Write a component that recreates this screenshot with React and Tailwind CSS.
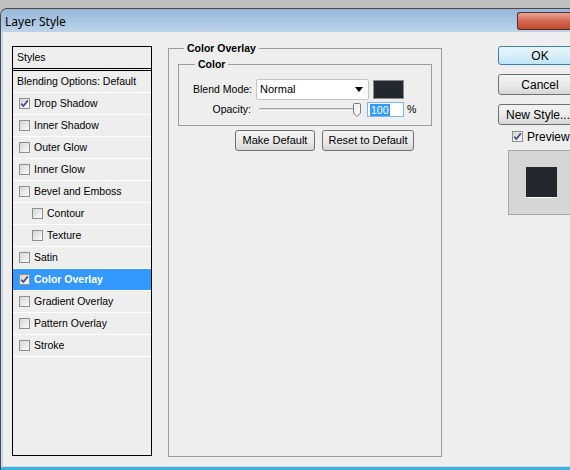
import React from "react";

const font = { fontFamily: '"Liberation Sans", Arial, sans-serif' };

const Check = ({ checked }) => (
  <span className="w-[11px] h-[11px] shrink-0 border border-[#8e8f8f] bg-gradient-to-br from-[#d6d6d6] to-[#fbfbfb] flex items-center justify-center">
    {checked && (
      <svg width="9" height="9" viewBox="0 0 9 9">
        <path d="M1.2 4.6 L3.4 7 L7.8 1.4" fill="none" stroke="#3b4f86" strokeWidth="1.7" />
      </svg>
    )}
  </span>
);

const styles = [
  { name: "Drop Shadow", checked: true },
  { name: "Inner Shadow" },
  { name: "Outer Glow" },
  { name: "Inner Glow" },
  { name: "Bevel and Emboss" },
  { name: "Contour", sub: true },
  { name: "Texture", sub: true },
  { name: "Satin" },
  { name: "Color Overlay", checked: true, active: true },
  { name: "Gradient Overlay" },
  { name: "Pattern Overlay" },
  { name: "Stroke" },
];

const Btn = ({ children, className = "" }) => (
  <button
    className={
      "h-[21px] border border-[#707070] rounded-[3px] bg-gradient-to-b from-[#f3f3f3] via-[#ebebeb] to-[#d7d7d7] text-black flex items-center justify-center " +
      className
    }
  >
    {children}
  </button>
);

export default function App() {
  return (
    <div className="w-[570px] h-[470px] overflow-hidden flex flex-col bg-[#c0c0c0] text-[10.5px] text-black" style={font}>
      <div className="h-[8px] shrink-0" />
      <div className="flex-1 flex flex-col border-t border-l border-[#4b4b4b] rounded-tl-[7px] overflow-hidden">
        {/* title bar */}
        <div className="h-[23px] shrink-0 flex items-start bg-gradient-to-b from-[#97b6d7] to-[#bdd3ea]">
          <span className="pl-[4px] mt-[4px] text-[12px] text-black" style={{ fontFamily: '"Noto Sans", sans-serif' }}>
            Layer Style
          </span>
          <div className="flex-1" />
          <div className="mt-[3px] w-[53px] h-[18px] rounded-tl-[3px] rounded-bl-[3px] border border-r-0 border-[#5b2a2a] bg-gradient-to-b from-[#e8a696] via-[#d36a55] to-[#bf4a2a]" />
        </div>

        {/* body */}
        <div className="flex-1 flex bg-[#c8d8ec] pl-[2px] pb-[1px]">
          <div className="flex-1 flex items-start bg-[#eeeeee]">
            {/* left styles list */}
            <div className="ml-[9px] mt-[14px] w-[140px] h-[410px] shrink-0 border border-black flex flex-col">
              <div className="h-[22px] border-b border-black flex items-center px-[4px]">Styles</div>
              <div className="h-[1px]" />
              <div className="border-t border-black">
                <div className="h-[22px] border-b border-white flex items-center px-[4px]">
                  Blending Options: Default
                </div>
                {styles.map((s) => (
                  <div
                    key={s.name}
                    className={
                      "h-[22px] border-b border-white flex items-center gap-[4px] " +
                      (s.sub ? "pl-[19px] " : "pl-[6px] ") +
                      (s.active ? "bg-[#3399ff] text-white font-bold" : "")
                    }
                  >
                    <Check checked={s.checked} />
                    <span>{s.name}</span>
                  </div>
                ))}
              </div>
            </div>

            {/* middle panel */}
            <fieldset className="ml-[16px] mt-[10px] w-[274px] h-[415px] shrink-0 border border-[#9c9c9c]">
              <legend className="ml-[15px] px-[3px] font-bold leading-[13px]">Color Overlay</legend>
              <fieldset className="mx-[9px] mt-[3px] border border-[#9c9c9c] pt-[8px] pb-[8px]">
                <legend className="ml-[16px] px-[3px] font-bold leading-[13px]">Color</legend>
                <div className="h-[21px] flex items-center">
                  <span className="w-[73px] text-right">Blend Mode:</span>
                  <div className="ml-[4px] w-[113px] h-[21px] bg-white border border-[#c5c5c5] rounded-[2px] flex items-center pl-[3px] pr-[5px] text-[11px]">
                    <span className="flex-1">Normal</span>
                    <svg width="8" height="5" viewBox="0 0 8 5">
                      <path d="M0 0 H8 L4 5 Z" fill="#000" />
                    </svg>
                  </div>
                  <div className="ml-[4px] w-[31px] h-[19px] bg-[#22282d] border border-[#8a8a8a]" />
                </div>
                <div className="mt-[2px] h-[15px] flex items-center">
                  <span className="w-[72px] text-right">Opacity:</span>
                  <div className="ml-[8px] w-[102px] h-[15px] flex items-center">
                    <div className="flex-1 h-[3px] border-t border-[#a6a6a6] border-b border-b-white bg-[#d8d8d8]" />
                    <svg width="8" height="14" viewBox="0 0 8 14" className="shrink-0 -ml-[2px]">
                      <path d="M1.5 0.5 H6.5 Q7.5 0.5 7.5 1.5 V10 L4 13.5 L0.5 10 V1.5 Q0.5 0.5 1.5 0.5 Z" fill="#f4f4f4" stroke="#7a7a7a" />
                    </svg>
                  </div>
                  <div className="ml-[6px] w-[37px] h-[15px] bg-white border border-[#7eb4ea] flex items-center pl-[2px]">
                    <span className="bg-[#3399ff] text-white leading-[12px] px-[1px]">100</span>
                  </div>
                  <span className="ml-[3px]">%</span>
                </div>
              </fieldset>
              <div className="mt-[4px] ml-[66px] flex gap-[7px] text-[11px]">
                <Btn className="w-[80px]">Make Default</Btn>
                <Btn className="w-[92px]">Reset to Default</Btn>
              </div>
            </fieldset>

            {/* right column */}
            <div className="ml-[56px] mt-[14px] w-[84px] shrink-0 flex flex-col text-[12px]">
              <button className="h-[19px] border border-[#3c7fb1] rounded-[3px] bg-gradient-to-b from-[#e8f5fc] via-[#d9effa] to-[#bee4f7] flex items-center justify-center">
                OK
              </button>
              <Btn className="mt-[9px] h-[19px]">Cancel</Btn>
              <Btn className="mt-[9px] h-[19px] justify-start pl-[7px]">New Style...</Btn>
              <div className="mt-[5px] h-[13px] pl-[14px] flex items-center gap-[4px]">
                <Check checked />
                <span>Preview</span>
              </div>
              <div className="mt-[7px] ml-[10px] w-[66px] h-[65px] bg-[#d6d6d6] border border-[#a8a8a8] flex items-center justify-center">
                <div className="w-[31px] h-[31px] bg-[#22282d] border-b border-white" />
              </div>
            </div>
          </div>
        </div>
        <div className="h-[3px] shrink-0 bg-[#3fb4dc]" />
      </div>
    </div>
  );
}
